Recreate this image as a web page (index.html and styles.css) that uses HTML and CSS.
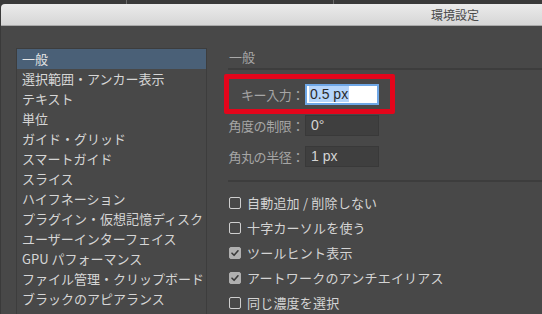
FILE: index.html
```html
<!DOCTYPE html>
<html lang="ja">
<head>
<meta charset="utf-8">
<title>環境設定</title>
<link rel="stylesheet" href="styles.css">
</head>
<body>
<div class="topstrip">
  <span class="seg seg-a"></span>
  <span class="seg seg-b"></span>
  <span class="seg seg-c"></span>
</div>
<div class="window">
  <div class="titlebar"><span class="title">環境設定</span></div>
  <div class="content">
    <ul class="cats">
      <li class="cat selected">一般</li>
      <li class="cat">選択範囲・アンカー表示</li>
      <li class="cat">テキスト</li>
      <li class="cat">単位</li>
      <li class="cat">ガイド・グリッド</li>
      <li class="cat">スマートガイド</li>
      <li class="cat">スライス</li>
      <li class="cat">ハイフネーション</li>
      <li class="cat">プラグイン・仮想記憶ディスク</li>
      <li class="cat">ユーザーインターフェイス</li>
      <li class="cat">GPU パフォーマンス</li>
      <li class="cat">ファイル管理・クリップボード</li>
      <li class="cat">ブラックのアピアランス</li>
    </ul>
    <section class="pane">
      <h2 class="pane-title">一般</h2>
      <div class="fields">
        <div class="field">
          <span class="label">キー入力：</span>
          <span class="input active"><span class="sel">0.5 px</span></span>
        </div>
        <div class="field">
          <span class="label">角度の制限：</span>
          <span class="input">0°</span>
        </div>
        <div class="field">
          <span class="label">角丸の半径：</span>
          <span class="input">1 px</span>
        </div>
        <div class="annot"></div>
      </div>
      <div class="checks">
        <div class="check"><span class="box"></span><span class="ctext">自動追加 / 削除しない</span></div>
        <div class="check"><span class="box"></span><span class="ctext">十字カーソルを使う</span></div>
        <div class="check"><span class="box on"><svg viewBox="0 0 12 12" width="12" height="12"><path d="M3 6.2 L5.1 8.3 L9 3.8" fill="none" stroke="#3a3a3a" stroke-width="1.6" stroke-linecap="round" stroke-linejoin="round"/></svg></span><span class="ctext">ツールヒント表示</span></div>
        <div class="check"><span class="box on"><svg viewBox="0 0 12 12" width="12" height="12"><path d="M3 6.2 L5.1 8.3 L9 3.8" fill="none" stroke="#3a3a3a" stroke-width="1.6" stroke-linecap="round" stroke-linejoin="round"/></svg></span><span class="ctext">アートワークのアンチエイリアス</span></div>
        <div class="check"><span class="box"></span><span class="ctext">同じ濃度を選択</span></div>
      </div>
    </section>
  </div>
</div>
</body>
</html>
```
FILE: styles.css
```css
* { box-sizing: border-box; }
html, body { margin: 0; padding: 0; }
body {
  width: 542px;
  height: 314px;
  overflow: hidden;
  background: #3a3a3a;
  font-family: "Noto Sans CJK JP", "Noto Sans", sans-serif;
  font-size: 13px;
}
.topstrip {
  display: flex;
  height: 4px;
  background: #3a3a3a;
}
.seg { display: block; height: 4px; }
.seg-a { width: 127px; border-right: 1px solid #6a6a6a; }
.seg-b { width: 207px; border-right: 1px solid #6a6a6a; }
.seg-c { flex: 1; }
.window {
  margin-left: 1px;
  width: 560px;
  height: 310px;
  background: #484848;
  border-radius: 4px 4px 0 0;
  overflow: hidden;
}
.titlebar {
  height: 22px;
  background: linear-gradient(#ebebeb, #d6d6d6);
  border-bottom: 1px solid #a9a9a9;
  display: flex;
  align-items: center;
  justify-content: flex-end;
  padding-right: 82px;
}
.title {
  font-size: 12px;
  color: #4a4a4a;
  line-height: 1;
}
.content {
  display: flex;
  padding: 22px 0 0 15px;
  gap: 21px;
}
.cats {
  list-style: none;
  margin: 0;
  padding: 0;
  width: 191px;
  height: 300px;
  border: 1px solid #3d3d3d;
  border-bottom: none;
}
.cat {
  height: 20px;
  line-height: 20px;
  padding-left: 5px;
  color: #d6d6d6;
  white-space: nowrap;
}
.cat.selected {
  background: #4a6077;
  color: #e6e6e6;
}
.pane {
  flex: 1;
  padding-top: 0;
}
.pane-title {
  margin: 0;
  font-size: 13px;
  font-weight: normal;
  color: #a9a9a9;
  line-height: 18px;
  padding-left: 1px;
  padding-bottom: 2px;
  border-bottom: 2px solid #3d3d3d;
}
.fields {
  position: relative;
  padding-top: 14px;
  padding-bottom: 13px;
  display: flex;
  flex-direction: column;
  gap: 10px;
  border-bottom: 2px solid #3d3d3d;
}
.field {
  display: flex;
  align-items: center;
  height: 21px;
}
.label {
  width: 76px;
  text-align: right;
  color: #a6a6a6;
  white-space: nowrap;
  letter-spacing: -0.4px;
}
.input {
  margin-left: 1px;
  width: 74px;
  height: 21px;
  background: #3f3f3f;
  border: 1px solid #393939;
  color: #d4d4d4;
  padding-left: 5px;
  line-height: 19px;
  font-family: "Liberation Sans", "Noto Sans CJK JP", sans-serif;
  font-size: 14px;
}
.input.active {
  background: #ffffff;
  border: 2px solid #6fa7e6;
  padding-left: 2px;
  line-height: 17px;
}
.sel {
  background: #b5d5fb;
  color: #2a2a2a;
  padding: 0 1px;
}
.annot {
  position: absolute;
  left: -4px;
  top: 4px;
  width: 171px;
  height: 40px;
  border: 5px solid #e3051b;
  border-radius: 2px;
}
.checks {
  padding-top: 8px;
  display: flex;
  flex-direction: column;
}
.check {
  display: flex;
  align-items: center;
  height: 25px;
  color: #d4d4d4;
}
.box {
  width: 12px;
  height: 12px;
  border: 1px solid #cfcfcf;
  border-radius: 2px;
  margin-left: 1px;
  margin-right: 6px;
  display: flex;
}
.box.on {
  background: #b0b0b0;
  border-color: #b0b0b0;
}
.box svg { display: block; margin: -1px; }
.ctext { white-space: nowrap; letter-spacing: 0.2px; }
```
